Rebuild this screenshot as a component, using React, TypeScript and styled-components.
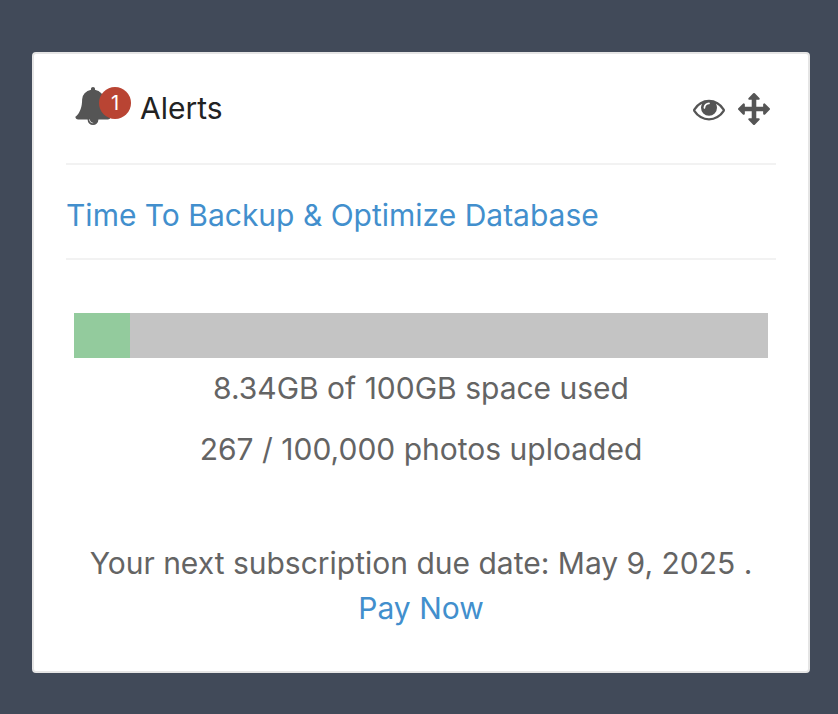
import React from "react";
import styled, { createGlobalStyle } from "styled-components";

const GlobalStyle = createGlobalStyle`
  *, *::before, *::after { box-sizing: border-box; }
  body {
    margin: 0;
    background: #414a59;
    font-family: Inter, "Liberation Sans", sans-serif;
    font-size: 30px;
    line-height: 45px;
    color: #646464;
  }
`;

const Page = styled.main`
  padding: 52px 28px 40px 32px;
`;

const Card = styled.section`
  padding: 14px 32px 40px;
  background: #fff;
  border: 2px solid #e5e5e5;
  border-radius: 4px;
`;

const Header = styled.header`
  display: flex;
  align-items: center;
  height: 97px;
  padding: 0 6px 14px 8px;
  border-bottom: 2px solid #f2f2f2;
`;

const BellWrap = styled.span`
  position: relative;
  display: flex;
  width: 57px;
  height: 43px;
  margin-right: 9px;
  color: #555;
`;

const Badge = styled.span`
  position: absolute;
  top: 0;
  right: 0;
  width: 32px;
  height: 32px;
  border-radius: 50%;
  background: #b94433;
  color: #fff;
  font-size: 20px;
  line-height: 32px;
  text-align: center;
`;

const Title = styled.h1`
  flex: 1;
  margin: 0;
  font-size: 30px;
  font-weight: 400;
  color: #222;
`;

const Actions = styled.div`
  display: flex;
  gap: 13px;
`;

const IconButton = styled.button`
  display: flex;
  padding: 0;
  border: 0;
  background: none;
  color: #555;
  cursor: pointer;
`;

const Glyph = styled.svg<{ $size: number }>`
  flex: none;
  width: ${(p) => p.$size}px;
  height: ${(p) => p.$size}px;
  fill: currentColor;
`;

const Notice = styled.div`
  padding: 28px 0 20px;
  border-bottom: 2px solid #f2f2f2;
`;

const Link = styled.a`
  color: #428fcd;
  text-decoration: none;
`;

const Usage = styled.div`
  padding: 53px 8px 0;
  text-align: center;
`;

const Track = styled.div`
  height: 45px;
  margin-bottom: 8px;
  background: #c4c4c4;
`;

const Fill = styled.div`
  width: 8%;
  height: 100%;
  background: #93cb9d;
`;

const Line = styled.p`
  margin: 0 0 16px;
`;

const Due = styled.p`
  margin: 69px 0 0;
`;

const icons = {
  bell: "M912 1696q0-16-16-16-59 0-101.500-42.500t-42.500-101.500q0-16-16-16t-16 16q0 73 51.500 124.500t124.500 51.500q16 0 16-16zm816-288q0 52-38 90t-90 38h-448q0 106-75 181t-181 75-181-75-75-181h-448q-52 0-90-38t-38-90q50-42 91-88t85-119.500 74.500-158.500 50-206 19.500-260q0-152 117-282.500t307-158.500q-8-19-8-39 0-40 28-68t68-28 68 28 28 68q0 20-8 39 190 28 307 158.500t117 282.500q0 139 19.500 260t50 206 74.500 158.500 85 119.500 91 88z",
  eye: "M1664 960q-152-236-381-353 61 104 61 225 0 185-131.500 316.500t-316.500 131.500-316.500-131.500-131.500-316.500q0-121 61-225-229 117-381 353 133 205 333.500 326.500t434.500 121.500 434.500-121.500 333.500-326.500zm-720-384q0-20-14-34t-34-14q-125 0-214.500 89.500t-89.500 214.500q0 20 14 34t34 14 34-14 14-34q0-86 61-147t147-61q20 0 34-14t14-34zm848 384q0 34-20 69-140 230-376.500 368.500t-499.500 138.500-499.500-139-376.500-368q-20-35-20-69t20-69q140-229 376.500-368t499.500-139 499.500 139 376.500 368q20 35 20 69z",
  move: "M1792 896q0 26-19 45l-256 256q-19 19-45 19t-45-19-19-45v-128h-384v384h128q26 0 45 19t19 45-19 45l-256 256q-19 19-45 19t-45-19l-256-256q-19-19-19-45t19-45 45-19h128v-384h-384v128q0 26-19 45t-45 19-45-19l-256-256q-19-19-19-45t19-45l256-256q19-19 45-19t45 19 19 45v128h384v-384h-128q-26 0-45-19t-19-45 19-45l256-256q19-19 45-19t45 19l256 256q19 19 19 45t-19 45-45 19h-128v384h384v-128q0-26 19-45t45-19 45 19l256 256q19 19 19 45z",
};

function Icon({ name, size }: { name: keyof typeof icons; size: number }) {
  return (
    <Glyph $size={size} viewBox="0 0 1792 1792" aria-hidden="true">
      <path d={icons[name]} />
    </Glyph>
  );
}

export default function App() {
  return (
    <>
      <GlobalStyle />
      <Page>
        <Card>
          <Header>
            <BellWrap>
              <Icon name="bell" size={38} />
              <Badge>1</Badge>
            </BellWrap>
            <Title>Alerts</Title>
            <Actions>
              <IconButton type="button" aria-label="Toggle visibility">
                <Icon name="eye" size={32} />
              </IconButton>
              <IconButton type="button" aria-label="Move panel">
                <Icon name="move" size={32} />
              </IconButton>
            </Actions>
          </Header>
          <Notice>
            <Link href="#backup">Time To Backup &amp; Optimize Database</Link>
          </Notice>
          <Usage>
            <Track role="progressbar" aria-label="Space used" aria-valuenow={8} aria-valuemin={0} aria-valuemax={100}>
              <Fill />
            </Track>
            <Line>8.34GB of 100GB space used</Line>
            <Line>267 / 100,000 photos uploaded</Line>
            <Due>
              Your next subscription due date: May 9, 2025 .<br />
              <Link href="#pay">Pay Now</Link>
            </Due>
          </Usage>
        </Card>
      </Page>
    </>
  );
}
